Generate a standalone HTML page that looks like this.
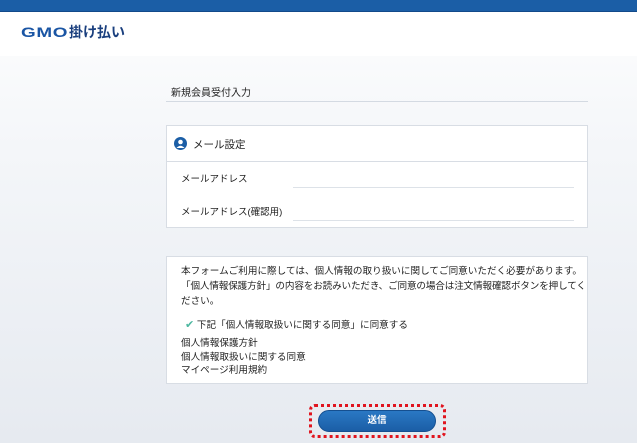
<!DOCTYPE html>
<html><head><meta charset="utf-8"><style>
*{margin:0;padding:0;box-sizing:border-box}
body{width:637px;height:443px;overflow:hidden;font-family:"Liberation Sans","Noto Sans CJK JP",sans-serif;color:#333;background:linear-gradient(#fafbfc 55px,#f4f6f9 150px,#e6eaf0 443px);position:relative}
.top{position:absolute;left:0;top:0;width:637px;height:12px;background:#1b5ea6;border-bottom:1px solid #124a8a}
.hdr{position:absolute;left:0;top:12px;width:637px;height:44px;background:#fff}
.logo{position:absolute;left:21px;top:22px;font-size:14px;font-weight:bold;color:#1a3f7e;white-space:nowrap}
.logo b{color:#1a55a4;font-size:14px;letter-spacing:0.5px;display:inline-block;transform:scaleX(1.35);transform-origin:left;margin-right:13px}
.abs{position:absolute}
.t{font-size:10px;color:#222}
.card{position:absolute;left:166px;width:422px;background:#fff;border:1px solid #d8dde4}
.line{position:absolute;height:1px;background:#dde2e8}
.s{font-size:9.6px;color:#222;line-height:15px;white-space:nowrap}
</style></head><body>
<div class="top"></div>
<div class="hdr"></div>
<div class="logo"><b>GMO</b>掛け払い</div>
<div class="abs t" style="left:171px;top:84px">新規会員受付入力</div>
<div class="line" style="left:166px;top:101px;width:422px;background:#d4dae2"></div>
<div class="card" style="top:125px;height:103px">
 <div class="line" style="left:0;top:35px;width:420px;background:#d8dde4"></div>
 <svg class="abs" style="left:7px;top:11px" width="13" height="13" viewBox="0 0 13 13"><circle cx="6.5" cy="6.5" r="6.5" fill="#1b5ea6"/><circle cx="6.5" cy="5" r="2.3" fill="#fff"/><path d="M2.5 11 Q6.5 6.5 10.5 11 Z" fill="#fff"/></svg>
 <div class="abs" style="left:26px;top:11px;font-size:10.5px;color:#222">メール設定</div>
 <div class="abs t" style="left:14px;top:45px;font-size:9.5px">メールアドレス</div>
 <div class="line" style="left:126px;top:61px;width:281px"></div>
 <div class="abs t" style="left:14px;top:78px;font-size:9.5px">メールアドレス(確認用)</div>
 <div class="line" style="left:126px;top:94px;width:281px"></div>
</div>
<div class="card" style="top:256px;height:128px">
 <div class="abs s" style="left:14px;top:7px">本フォームご利用に際しては、個人情報の取り扱いに関してご同意いただく必要があります。<br><span style="letter-spacing:-0.15px">「個人情報保護方針」の内容をお読みいただき、ご同意の場合は注文情報確認ボタンを押してく</span><br>ださい。</div>
 <div class="abs s" style="left:18px;top:61px"><span style="color:#4cb7a0;font-size:11px">✔</span> 下記「個人情報取扱いに関する同意」に同意する</div>
 <div class="abs s" style="left:14px;top:80px;line-height:13.5px">個人情報保護方針<br>個人情報取扱いに関する同意<br>マイページ利用規約</div>
</div>
<div class="abs" style="left:309px;top:404px;width:137px;height:34px;border:3px dotted #e0141e;border-radius:6px"></div>
<div class="abs" style="left:318px;top:410px;width:118px;height:22px;border-radius:11px;background:linear-gradient(#2a78c4,#1b5ea6);border:1px solid #154f90;color:#fff;font-size:9.5px;font-weight:bold;text-align:center;line-height:20px">送信</div>
</body></html>
